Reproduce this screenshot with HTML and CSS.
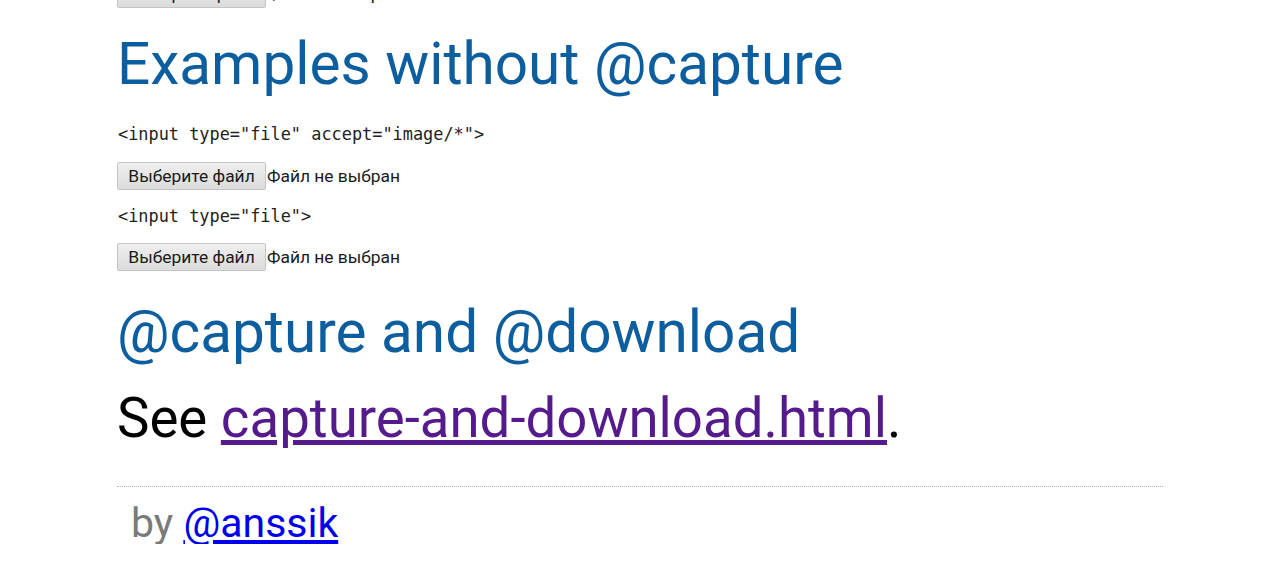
FILE: index.html
```html
<!DOCTYPE html>
<html lang="ru">
<head>
<meta charset="utf-8">
<title>Examples without @capture</title>
<link rel="stylesheet" href="styles.css">
</head>
<body>
<div class="page">
  <div class="file-row cut">
    <span class="file-btn">Выберите файл</span><span class="file-status">Файл не выбран</span>
  </div>
  <h1 class="title">Examples without @capture</h1>
  <p class="code">&lt;input type="file" accept="image/*"&gt;</p>
  <div class="file-row">
    <span class="file-btn">Выберите файл</span><span class="file-status">Файл не выбран</span>
  </div>
  <p class="code code-2">&lt;input type="file"&gt;</p>
  <div class="file-row">
    <span class="file-btn">Выберите файл</span><span class="file-status">Файл не выбран</span>
  </div>
  <h2 class="title title-2">@capture and @download</h2>
  <p class="see">See <a class="visited" href="#">capture-and-download.html</a>.</p>
  <footer class="footer">
    <span class="by">by</span> <a class="author" href="#">@anssik</a>
  </footer>
</div>
</body>
</html>
```

FILE: styles.css
```css
html, body {
  margin: 0;
  padding: 0;
  background: #ffffff;
}
body {
  font-family: Roboto, "Noto Sans", sans-serif;
  color: #000;
  overflow: hidden;
}
.page {
  margin-left: 117px;
  width: 1046px;
}
.file-row {
  display: flex;
  align-items: center;
  height: 28px;
  font-size: 17.4px;
}
.file-row.cut {
  margin-top: -20px;
}
.file-btn {
  box-sizing: border-box;
  height: 28px;
  width: 149px;
  display: inline-flex;
  align-items: center;
  justify-content: center;
  background: linear-gradient(#efefef, #dcdcdc);
  border: 1px solid #c4c4c4;
  border-radius: 2px;
  color: #1a1a1a;
}
.file-status {
  margin-left: 1px;
  color: #1a1a1a;
}
.title {
  margin: 28px 0 0 0;
  font-size: 58.5px;
  line-height: 56px;
  font-weight: 400;
  color: #0d5e9f;
}
.code {
  margin: 32px 0 18px 1px;
  font-family: "DejaVu Sans Mono", monospace;
  font-size: 16.9px;
  line-height: 20px;
  color: #222;
}
.code-2 {
  margin-top: 16px;
  margin-bottom: 17px;
}
.title-2 {
  margin-top: 33px;
}
.see {
  margin: 32px 0 0 0;
  font-size: 54.6px;
  line-height: 52px;
}
.visited {
  color: #551a8b;
}
.footer {
  margin-top: 42px;
  border-top: 1px dotted #b0b0b0;
  padding: 15px 0 0 14px;
  font-size: 41px;
  line-height: 42px;
}
.by {
  color: #7a7a7a;
}
.author {
  color: #0000ee;
}
```
